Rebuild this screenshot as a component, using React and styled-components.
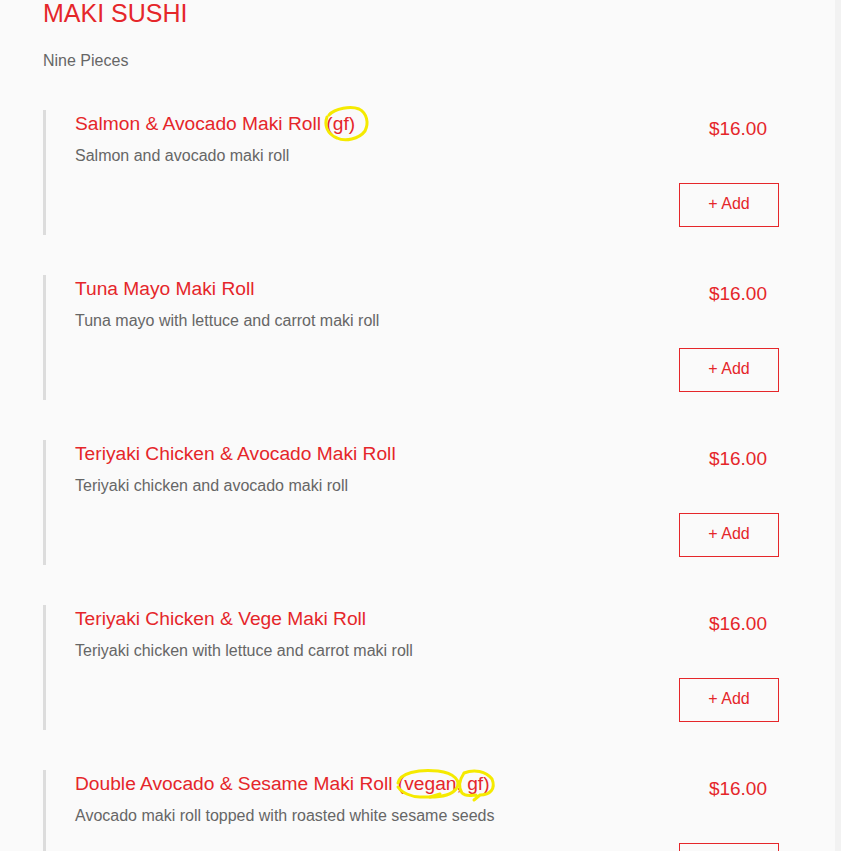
import React from "react";
import styled, { createGlobalStyle } from "styled-components";

const Global = createGlobalStyle`
  html, body { margin: 0; padding: 0; }
  body {
    background: #f2f2f2;
    font-family: "Liberation Sans", Arial, sans-serif;
    overflow: hidden;
  }
`;

const RED = "#e5262a";

const Page = styled.div`
  width: 835px;
  min-height: 851px;
  background: #fafafa;
  box-sizing: border-box;
  padding: 0 56px 0 43px;
`;

const Title = styled.h2`
  margin: 0;
  font-size: 25px;
  font-weight: 400;
  line-height: 26px;
  color: ${RED};
`;

const Subtitle = styled.p`
  margin: 25px 0 0;
  font-size: 16px;
  line-height: 20px;
  color: #666;
`;

const List = styled.div`
  display: flex;
  flex-direction: column;
  gap: 40px;
  margin-top: 39px;
`;

const Item = styled.div`
  display: flex;
  justify-content: space-between;
  border-left: 3px solid #dcdcdc;
  height: 125px;
  padding-left: 29px;
`;

const Info = styled.div`
  padding-top: 3px;
`;

const Name = styled.div`
  position: relative;
  display: inline-block;
  font-size: 19.2px;
  line-height: 22px;
  color: ${RED};
`;

const Desc = styled.div`
  margin-top: 11px;
  font-size: 16px;
  line-height: 20px;
  color: #666;
`;

const Side = styled.div`
  display: flex;
  flex-direction: column;
  align-items: flex-end;
  width: 100px;
`;

const Price = styled.div`
  margin-top: 8px;
  padding-right: 12px;
  font-size: 19px;
  line-height: 22px;
  color: ${RED};
`;

const AddButton = styled.button`
  margin-top: 43px;
  width: 100px;
  height: 44px;
  padding: 0 0 2px;
  background: transparent;
  border: 1px solid ${RED};
  border-radius: 0;
  color: ${RED};
  font-family: "Liberation Sans", Arial, sans-serif;
  font-size: 16px;
  cursor: pointer;
`;

const Scribble = styled.svg`
  position: absolute;
  overflow: visible;
  pointer-events: none;
`;

const items = [
  { name: "Salmon & Avocado Maki Roll", tags: "gf", desc: "Salmon and avocado maki roll" },
  { name: "Tuna Mayo Maki Roll", desc: "Tuna mayo with lettuce and carrot maki roll" },
  { name: "Teriyaki Chicken & Avocado Maki Roll", desc: "Teriyaki chicken and avocado maki roll" },
  { name: "Teriyaki Chicken & Vege Maki Roll", desc: "Teriyaki chicken with lettuce and carrot maki roll" },
  { name: "Double Avocado & Sesame Maki Roll", tags: "vg", desc: "Avocado maki roll topped with roasted white sesame seeds" },
];

function GfMark() {
  return (
    <Scribble style={{ right: -16, top: -8 }} width="50" height="40" viewBox="0 0 50 40">
      <path
        d="M8 10 C14 3 30 1 38 4 C46 8 48 18 44 26 C38 34 24 37 16 33 C6 29 3 20 6 12"
        fill="none"
        stroke="#f5ea00"
        strokeWidth="3"
        strokeLinecap="round"
      />
    </Scribble>
  );
}

function VeganMarks() {
  return (
    <Scribble style={{ right: -8, top: -6 }} width="104" height="40" viewBox="0 0 104 40">
      <path
        d="M4 16 C6 6 24 2 44 4 C60 6 68 14 62 22 C56 30 42 30 36 30 L26 30 C18 30 8 26 4 20"
        fill="none"
        stroke="#f5ea00"
        strokeWidth="3"
        strokeLinecap="round"
      />
      <path
        d="M36 30 L46 27"
        fill="none"
        stroke="#f5ea00"
        strokeWidth="3"
        strokeLinecap="round"
      />
      <path
        d="M70 6 C80 2 92 4 98 12 C102 22 96 28 86 28 L80 33 M70 6 C66 12 64 20 68 26 C72 30 78 28 82 28"
        fill="none"
        stroke="#f5ea00"
        strokeWidth="3"
        strokeLinecap="round"
      />
    </Scribble>
  );
}

export default function App() {
  return (
    <>
      <Global />
      <Page>
        <Title>MAKI SUSHI</Title>
        <Subtitle>Nine Pieces</Subtitle>
        <List>
          {items.map((it) => (
            <Item key={it.name}>
              <Info>
                <Name>
                  {it.name}
                  {it.tags === "gf" && <> (gf)<GfMark /></>}
                  {it.tags === "vg" && <> (vegan, gf)<VeganMarks /></>}
                </Name>
                <Desc>{it.desc}</Desc>
              </Info>
              <Side>
                <Price>$16.00</Price>
                <AddButton>+ Add</AddButton>
              </Side>
            </Item>
          ))}
        </List>
      </Page>
    </>
  );
}
